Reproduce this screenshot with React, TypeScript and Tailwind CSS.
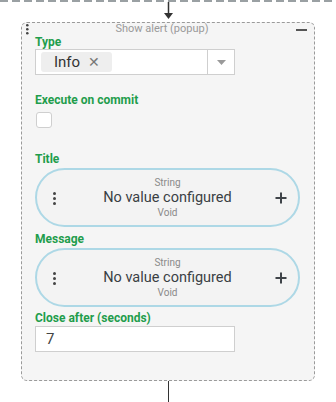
import { useState } from "react";

const Label = ({ children, className = "" }: { children: React.ReactNode; className?: string }) => (
  <div className={`text-[12px] leading-[14px] font-bold text-[#1f9d4c] ${className}`}>{children}</div>
);

const VDots = ({ size = 3, gap = 2, color = "#444" }: { size?: number; gap?: number; color?: string }) => (
  <svg width={size} height={size * 3 + gap * 2} viewBox={`0 0 ${size} ${size * 3 + gap * 2}`}>
    {[0, 1, 2].map((i) => (
      <circle key={i} cx={size / 2} cy={size / 2 + i * (size + gap)} r={size / 2} fill={color} />
    ))}
  </svg>
);

const ValuePill = ({ className = "" }: { className?: string }) => (
  <div
    className={`relative flex h-[59px] w-[265px] items-center rounded-full border-2 border-[#add8e6] bg-[#f3f3f3] ${className}`}
  >
    <div className="absolute left-[16px] top-[22px]">
      <VDots />
    </div>
    <div className="flex flex-1 flex-col items-center">
      <span className="text-[10px] leading-[12px] text-[#8a8a8a]">String</span>
      <span className="text-[14.5px] leading-[18px] text-[#3a3f44]">No value configured</span>
      <span className="text-[10px] leading-[12px] text-[#8a8a8a]">Void</span>
    </div>
    <svg className="absolute right-[11px] top-[22px]" width="12" height="12" viewBox="0 0 12 12">
      <path d="M6 0.5v11M0.5 6h11" stroke="#3f4449" strokeWidth="2" />
    </svg>
  </div>
);

export default function App() {
  const [checked, setChecked] = useState(false);

  return (
    <div className="flex h-[402px] w-[336px] flex-col items-center bg-white font-['Roboto',sans-serif]">
      {/* connector from above */}
      <svg width="336" height="22" viewBox="0 0 336 22" className="block shrink-0">
        <line x1="0" y1="1" x2="336" y2="1" stroke="#9aa0a3" strokeWidth="2" strokeDasharray="8 4" />
        <line x1="168.5" y1="2" x2="168.5" y2="14" stroke="#333" strokeWidth="1.5" />
        <path d="M164 13h9l-4.5 6z" fill="#333" />
      </svg>

      {/* node */}
      <div className="relative h-[359px] w-[294px] shrink-0 rounded-[6px] border border-dashed border-[#9a9a9a] bg-[#f5f5f5] pl-[13px]">
        <div className="absolute left-[4px] top-[1px]">
          <VDots size={2.6} gap={1.4} />
        </div>
        <div className="absolute right-[7px] top-[6px] h-[2px] w-[11px] bg-[#555]" />

        <div className="pr-[25px] text-center text-[11px] leading-[12px] text-[#9a9a9a]">Show alert (popup)</div>

        <Label>Type</Label>
        <div className="flex h-[26px] w-[200px] border border-[#cfcfcf] bg-white">
          <div className="flex flex-1 items-center pl-[5px]">
            <div className="flex h-[20px] w-[71px] items-center rounded-[3px] bg-[#eeeeee] pl-[13px]">
              <span className="text-[15px] leading-[18px] text-[#333]">Info</span>
              <span className="ml-[8px] text-[14px] leading-[18px] text-[#777]">✕</span>
            </div>
          </div>
          <div className="flex w-[27px] items-center justify-center border-l border-[#cfcfcf]">
            <svg width="9" height="5" viewBox="0 0 9 5">
              <path d="M0 0h9L4.5 5z" fill="#9a9a9a" />
            </svg>
          </div>
        </div>

        <Label className="mt-[18px]">Execute on commit</Label>
        <button
          onClick={() => setChecked(!checked)}
          className="mt-[5px] ml-[1px] block h-[16px] w-[16px] rounded-[3px] border border-[#cfcfcf] bg-white"
        />

        <Label className="mt-[24px]">Title</Label>
        <ValuePill className="mt-[2px]" />

        <Label className="mt-[5px]">Message</Label>
        <ValuePill className="mt-[2px]" />

        <Label className="mt-[4px]">Close after (seconds)</Label>
        <div className="mt-[1px] flex h-[26px] w-[200px] items-center border border-[#cfcfcf] bg-white pl-[10px]">
          <span className="text-[15px] text-[#444]">7</span>
        </div>
      </div>

      {/* connector below */}
      <div className="h-[21px] w-[1px] bg-[#333]" />
    </div>
  );
}
